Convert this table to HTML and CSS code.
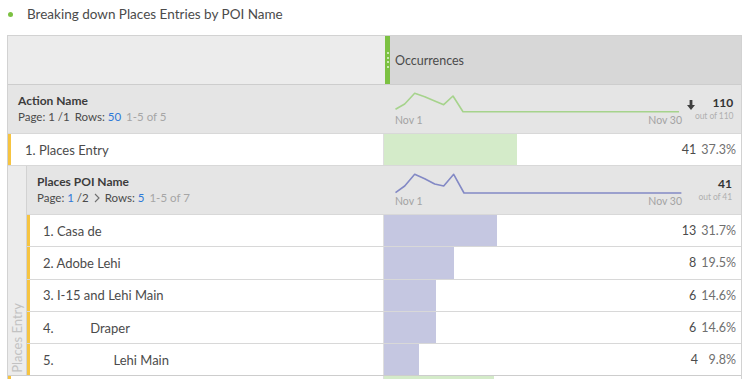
FILE: index.html
```html
<!DOCTYPE html>
<html lang="en">
<head>
    <meta charset="UTF-8">
    <meta name="viewport" content="width=device-width, initial-scale=1.0">
    <title>Places Entries by POI Name</title>
    <link rel="stylesheet" href="styles.css">
</head>
<body>
    <div class="panel">
        <p class="breakdown"><span class="dot"></span>Breaking down Places Entries by POI Name</p>

        <div class="freeform">
            <div class="head-row">
                <div class="head-dim"></div>
                <div class="head-metric">
                    <span class="grip"><i></i><i></i><i></i><i></i></span>
                    Occurrences
                </div>
            </div>

            <div class="row dim-row">
                <div class="dim-cell">
                    <div class="dim-name">Action Name</div>
                    <div class="pager">Page: 1 /1<span class="rows">Rows: <a>50</a></span><span class="range">1-5 of 5</span></div>
                </div>
                <div class="metric-cell summary">
                    <div class="trend">
                        <svg class="spark" width="287" height="25" viewBox="0 0 287 25">
                            <polyline class="line-green" points="0.5,19.3 9.7,14 19.7,3.3 29.7,6.7 39.7,11 48.7,14.7 58,6 68,21.7 284,21.7"></polyline>
                        </svg>
                        <div class="trend-axis"><span>Nov 1</span><span>Nov 30</span></div>
                    </div>
                    <svg class="sort" width="8" height="10" viewBox="0 0 8 10">
                        <path d="M2.6 0h2.8v5H8L4 10 0 5h2.6z"></path>
                    </svg>
                    <div class="total"><b>110</b><small>out of 110</small></div>
                </div>
            </div>

            <div class="row item">
                <div class="dim-cell">1. Places Entry</div>
                <div class="metric-cell">
                    <div class="bar green" style="width: 37.3%"></div>
                    <span class="val">41</span><span class="pct">37.3%</span>
                </div>
            </div>

            <div class="nested">
                <div class="gutter"><span>Places Entry</span></div>
                <div class="nested-rows">
                    <div class="row dim-row">
                        <div class="dim-cell">
                            <div class="dim-name">Places POI Name</div>
                            <div class="pager">Page: <a>1</a> /2<svg class="chevron" width="6" height="10" viewBox="0 0 6 10"><polyline points="1,1 5,5 1,9"></polyline></svg><span class="rows">Rows: <a>5</a></span><span class="range">1-5 of 7</span></div>
                        </div>
                        <div class="metric-cell summary">
                            <div class="trend">
                                <svg class="spark" width="287" height="25" viewBox="0 0 287 25">
                                    <polyline class="line-purple" points="0.5,21.7 9.7,15 19.7,3.3 29.7,7.7 39.7,13 48.7,15 58.7,3.3 69,22 286.4,22"></polyline>
                                </svg>
                                <div class="trend-axis"><span>Nov 1</span><span>Nov 30</span></div>
                            </div>
                            <div class="total"><b>41</b><small>out of 41</small></div>
                        </div>
                    </div>

                    <div class="row item">
                        <div class="dim-cell">1. Casa de</div>
                        <div class="metric-cell">
                            <div class="bar purple" style="width: 31.7%"></div>
                            <span class="val">13</span><span class="pct">31.7%</span>
                        </div>
                    </div>
                    <div class="row item">
                        <div class="dim-cell">2. Adobe Lehi</div>
                        <div class="metric-cell">
                            <div class="bar purple" style="width: 19.5%"></div>
                            <span class="val">8</span><span class="pct">19.5%</span>
                        </div>
                    </div>
                    <div class="row item">
                        <div class="dim-cell">3. I-15 and Lehi Main</div>
                        <div class="metric-cell">
                            <div class="bar purple" style="width: 14.6%"></div>
                            <span class="val">6</span><span class="pct">14.6%</span>
                        </div>
                    </div>
                    <div class="row item">
                        <div class="dim-cell">4.           Draper</div>
                        <div class="metric-cell">
                            <div class="bar purple" style="width: 14.6%"></div>
                            <span class="val">6</span><span class="pct">14.6%</span>
                        </div>
                    </div>
                    <div class="row item">
                        <div class="dim-cell">5.                  Lehi Main</div>
                        <div class="metric-cell">
                            <div class="bar purple" style="width: 9.8%"></div>
                            <span class="val">4</span><span class="pct">9.8%</span>
                        </div>
                    </div>
                </div>
            </div>

            <!-- next Action Name row, scrolled below the fold -->
            <div class="row item">
                <div class="dim-cell"></div>
                <div class="metric-cell">
                    <div class="bar green" style="width: 30.9%"></div>
                </div>
            </div>
        </div>
    </div>
</body>
</html>
```

FILE: styles.css
```css
body {
    margin: 0;
    font-family: Lato, "Open Sans", sans-serif;
    color: #4b4b4b;
    background: #fff;
}
.panel {
    width: 735px;
    padding-left: 7px;
}
.breakdown {
    display: flex;
    align-items: center;
    height: 27px;
    margin: 0 0 8px;
    font-size: 13.5px;
}
.dot {
    width: 5px;
    height: 5px;
    border-radius: 50%;
    background: #7cc142;
    margin: 1px 14px 0 1px;
}
.freeform {
    border: 1px solid #d2d2d2;
}

/* column header */
.head-row {
    display: flex;
    height: 48px;
    border-bottom: 1px solid #cdcdcd;
}
.head-dim {
    width: 377px;
    background: #ececec;
}
.head-metric {
    flex: 1;
    display: flex;
    align-items: center;
    background: #d7d7d7;
    font-size: 12.5px;
    color: #4b4b4b;
}
.grip {
    align-self: stretch;
    width: 5px;
    margin-right: 5px;
    background: #7cc142;
    display: flex;
    flex-direction: column;
    justify-content: center;
    align-items: center;
    gap: 2.6px;
}
.grip i {
    width: 2px;
    height: 2px;
    border-radius: 50%;
    background: #e6f4da;
}

/* rows */
.row {
    display: flex;
    border-bottom: 1px solid #d8d8d8;
}
.dim-cell {
    flex: 1;
    border-right: 1px solid #dedede;
}
.metric-cell {
    width: 357px;
    position: relative;
    display: flex;
    align-items: center;
    justify-content: flex-end;
    padding-right: 5px;
    box-sizing: border-box;
}

.dim-row {
    height: 48px;
    background: #e5e5e5;
}
.dim-row .dim-cell {
    padding: 8px 0 0 10px;
    border-right-color: #e5e5e5;
}
.dim-name {
    font-size: 12px;
    font-weight: bold;
    line-height: 16px;
    color: #3c3c3c;
}
.pager {
    font-size: 11.5px;
    line-height: 16px;
    white-space: nowrap;
}
.pager a {
    color: #2f79d8;
}
.pager .rows,
.pager .range {
    margin-left: 5px;
}
.pager .range {
    color: #a6a6a6;
}
.chevron {
    vertical-align: -1px;
    margin-left: 5px;
}
.chevron polyline {
    fill: none;
    stroke: #6f6f6f;
    stroke-width: 1.1;
}

.summary {
    align-items: flex-start;
    justify-content: flex-start;
    padding: 5px 9px 0 11px;
}
.trend {
    width: 287px;
    flex-shrink: 0;
}
.spark {
    display: block;
}
.spark polyline {
    fill: none;
    stroke-width: 1.6;
    stroke-linejoin: round;
}
.line-green {
    stroke: #a6d38c;
}
.line-purple {
    stroke: #8389c5;
}
.trend-axis {
    display: flex;
    justify-content: space-between;
    font-size: 10.5px;
    line-height: 11px;
    color: #a3a3a3;
}
.sort {
    flex-shrink: 0;
    margin: 10px 0 0 5px;
    fill: #3f3f3f;
}
.total {
    margin-left: auto;
    text-align: right;
    padding-top: 6px;
    white-space: nowrap;
}
.total b {
    display: block;
    font-size: 12px;
    line-height: 14px;
    color: #333;
}
.total small {
    display: block;
    font-size: 8.5px;
    line-height: 12px;
    letter-spacing: -0.1px;
    color: #b0b0b0;
}

.item {
    height: 31px;
    background: #fff;
}
.item .dim-cell {
    display: flex;
    align-items: center;
    border-left: 3px solid #f6c441;
    padding-left: 14px;
    font-size: 13px;
    white-space: pre;
}
.nested .item {
    height: 31.3px;
}
.nested .item .dim-cell {
    padding-left: 13px;
}
.bar {
    position: absolute;
    top: 0;
    bottom: 0;
    left: 0;
}
.bar.green {
    background: #d4ebc9;
}
.bar.purple {
    background: #c5c7e1;
}
.val,
.pct {
    position: relative;
    font-size: 12.5px;
}
.pct {
    min-width: 33px;
    margin-left: 5px;
    text-align: right;
    color: #6f6f6f;
}

/* breakdown block */
.nested {
    display: flex;
    border-bottom: 1px solid #cdcdcd;
}
.gutter {
    width: 18px;
    background: #ececec;
    border-right: 1px solid #d2d2d2;
    display: flex;
    justify-content: center;
    align-items: flex-end;
    padding-bottom: 3px;
}
.gutter span {
    writing-mode: vertical-rl;
    transform: rotate(180deg);
    font-size: 13px;
    color: #c2c2c2;
}
.nested-rows {
    flex: 1;
}
.nested-rows .row:last-child {
    border-bottom: none;
}
```
